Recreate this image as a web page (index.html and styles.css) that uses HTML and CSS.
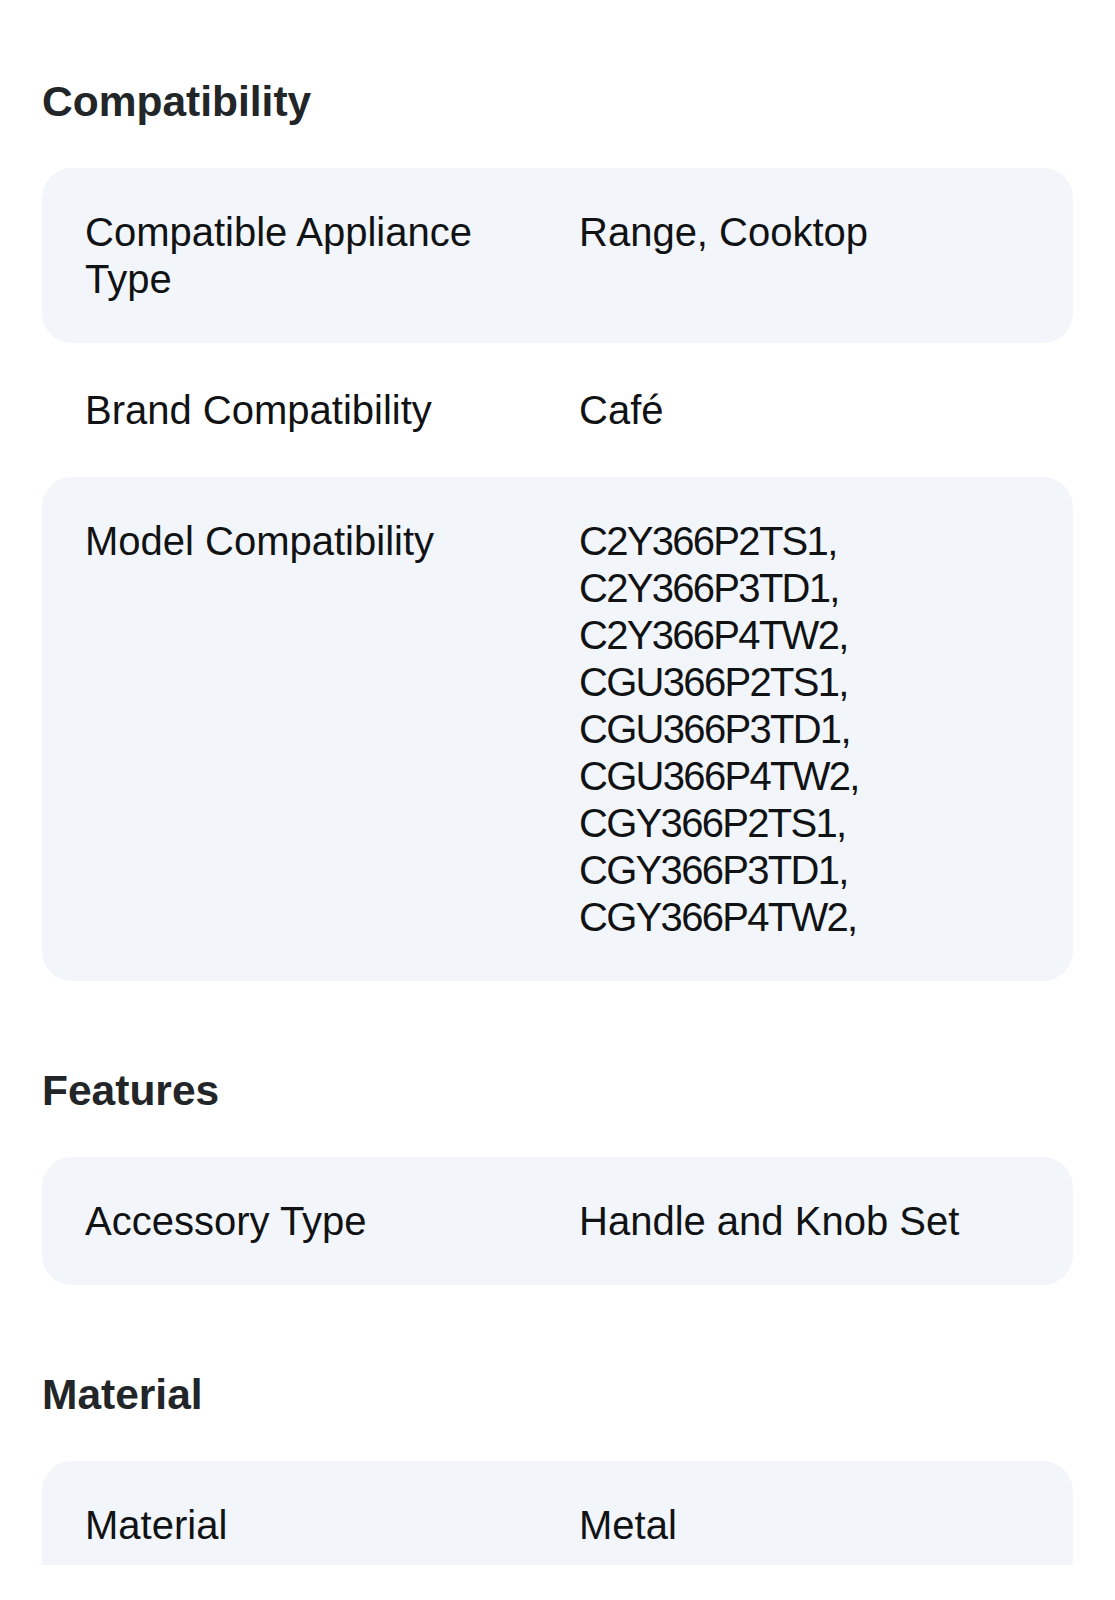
FILE: index.html
```html
<!DOCTYPE html>
<html lang="en">
<head>
<meta charset="UTF-8" />
<meta name="viewport" content="width=device-width, initial-scale=1" />
<title>Specifications</title>
<link rel="stylesheet" href="styles.css">
</head>
<body>

<div class="specs">
  <section class="spec-group">
    <h2>Compatibility</h2>
    <div class="spec-row shaded">
      <div class="spec-label">Compatible Appliance Type</div>
      <div class="spec-value">Range, Cooktop</div>
    </div>
    <div class="spec-row">
      <div class="spec-label">Brand Compatibility</div>
      <div class="spec-value">Café</div>
    </div>
    <div class="spec-row shaded">
      <div class="spec-label">Model Compatibility</div>
      <div class="spec-value models">C2Y366P2TS1,<br>C2Y366P3TD1,<br>C2Y366P4TW2,<br>CGU366P2TS1,<br>CGU366P3TD1,<br>CGU366P4TW2,<br>CGY366P2TS1,<br>CGY366P3TD1,<br>CGY366P4TW2,</div>
    </div>
  </section>

  <section class="spec-group">
    <h2>Features</h2>
    <div class="spec-row shaded">
      <div class="spec-label">Accessory Type</div>
      <div class="spec-value">Handle and Knob Set</div>
    </div>
  </section>

  <section class="spec-group">
    <h2>Material</h2>
    <div class="spec-row shaded cut">
      <div class="spec-label">Material</div>
      <div class="spec-value">Metal</div>
    </div>
  </section>
</div>

</body>
</html>
```

FILE: styles.css
```css
body {
  margin: 0;
  background: #fff;
  font-family: "Liberation Sans", Arial, sans-serif;
  color: #111214;
}

.specs {
  padding: 78px 42px 0;
  display: flex;
  flex-direction: column;
  gap: 86px;
}

.spec-group h2 {
  margin: 0 0 42px;
  font-size: 42.5px;
  line-height: 48px;
  font-weight: 700;
  color: #222629;
}

.spec-row {
  display: grid;
  grid-template-columns: 1fr 1fr;
  gap: 43px;
  padding: 40.5px 43px;
  font-size: 40px;
  line-height: 47px;
  border-radius: 30px;
}

.spec-row + .spec-row {
  margin-top: 3px;
}

.spec-row.shaded {
  background: #f2f6fb;
}

.spec-value.models {
  letter-spacing: -1.7px;
}

/* last card runs off the bottom of the shot */
.spec-row.cut {
  padding-bottom: 16px;
  border-radius: 30px 30px 0 0;
}
```
